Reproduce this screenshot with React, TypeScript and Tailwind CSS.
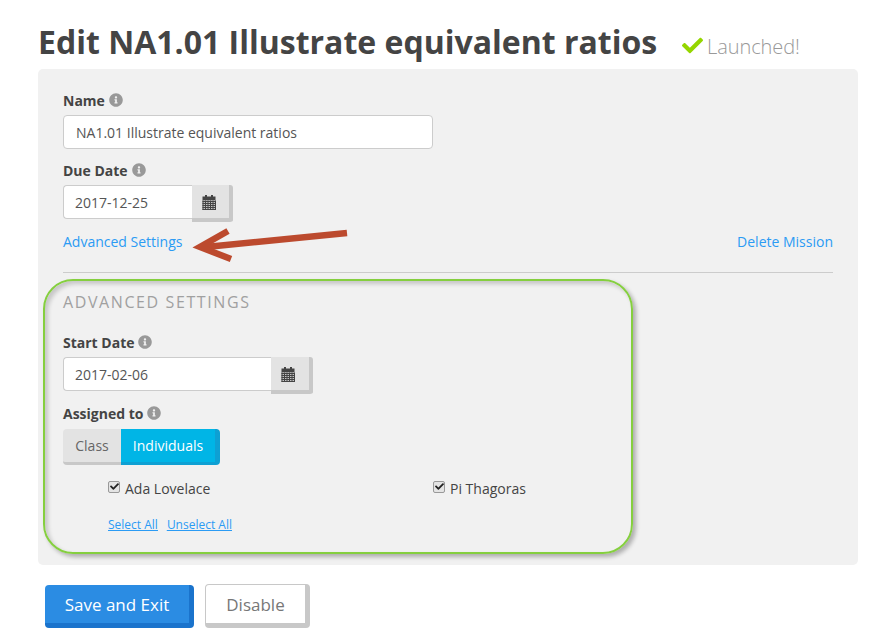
import React from "react";
import { FaCheck, FaInfoCircle } from "react-icons/fa";

const Label = ({ children, mt }: { children: React.ReactNode; mt: string }) => (
  <div className={`flex items-center gap-[4px] h-[20px] text-[14px] font-bold text-[#444] ${mt}`}>
    <span>{children}</span>
    <FaInfoCircle className="text-[#999] w-[14px] h-[14px] -mt-[1px]" />
  </div>
);

const CalendarIcon = () => (
  <svg width="14" height="15" viewBox="0 0 14 15" fill="none">
    <rect x="0.5" y="1.5" width="13" height="4" fill="#444" />
    <rect x="3" y="0" width="2" height="3" fill="#444" />
    <rect x="9" y="0" width="2" height="3" fill="#444" />
    <rect x="0.5" y="5.5" width="13" height="9" fill="#c4c4c4" />
    <path d="M0.5 6.5H13.5M0.5 8.5H13.5M0.5 10.5H13.5M0.5 12.5H13.5M0.5 14.5H13.5M1 5.5V15M3.5 5.5V15M6 5.5V15M8.5 5.5V15M11 5.5V15M13.5 5.5V15" stroke="#444" strokeWidth="1" />
  </svg>
);

const DateInput = ({ value, inputW, addonW }: { value: string; inputW: string; addonW: string }) => (
  <div className="flex items-start mt-[5px]">
    <div className={`${inputW} h-[34px] bg-white border border-[#ccc] rounded-l-[4px] border-r-0 pl-[11px] flex items-center text-[14px] text-[#555]`}>{value}</div>
    <div className={`${addonW} h-[37px] bg-[#e3e3e3] border-r-[4px] border-b-[4px] border-[#c8c8c8] rounded-r-[3px] flex items-center justify-center pr-[4px] pt-[1px]`}>
      <CalendarIcon />
    </div>
  </div>
);

const Check = ({ label, cls }: { label: string; cls: string }) => (
  <label className={`flex items-center text-[14px] text-[#444] h-[20px] ${cls}`}>
    <span className="relative w-[12px] h-[12px] -mt-[3px] mr-[5px] rounded-[2px] border border-[#999] bg-[#e4e4e4] flex items-center justify-center">
      <FaCheck className="w-[9px] h-[9px] text-[#222]" />
    </span>
    {label}
  </label>
);

export default function App() {
  return (
    <div className="relative w-[883px] h-[639px] overflow-hidden bg-white font-['Open_Sans',sans-serif]">
      <div className="h-[69px] pl-[38px] pt-[20px] flex items-start">
        <h1 className="text-[32px] leading-[44px] font-bold text-[#444] whitespace-nowrap">Edit NA1.01 Illustrate equivalent ratios</h1>
        <div className="flex items-center ml-[25px] mt-[8px] h-[36px]">
          <FaCheck className="w-[21px] h-[21px] text-[#95d600] mr-[4px] -mt-[1px]" />
          <span className="text-[20px] font-light text-[#999] tracking-[-0.1px] mt-[2px]">Launched!</span>
        </div>
      </div>

      <div className="relative mx-[38px] w-[820px] h-[496px] bg-[#f1f1f1] rounded-[5px] px-[25px] pt-[21px]">
        <Label mt="">Name</Label>
        <div className="mt-[5px] w-[370px] h-[34px] bg-white border border-[#ccc] rounded-[4px] pl-[12px] flex items-center text-[14px] text-[#555]">NA1.01 Illustrate equivalent ratios</div>
        <Label mt="mt-[11px]">Due Date</Label>
        <DateInput value="2017-12-25" inputW="w-[129px]" addonW="w-[41px]" />
        <div className="flex justify-between items-center h-[20px] mt-[9px] text-[14px] text-[#2b9bf4]">
          <a>Advanced Settings</a>
          <a>Delete Mission</a>
        </div>
        <div className="mt-[21px] h-px bg-[#ccc]" />
        <h2 className="mt-[18px] text-[16px] leading-[22px] tracking-[1.6px] uppercase text-[#a0a0a0] font-normal">Advanced Settings</h2>
        <Label mt="mt-[19px]">Start Date</Label>
        <DateInput value="2017-02-06" inputW="w-[208px]" addonW="w-[42px]" />
        <Label mt="mt-[9px]">Assigned to</Label>
        <div className="flex mt-[6px] h-[36px] text-[14px]">
          <div className="w-[58px] bg-[#e3e3e3] border-b-[3px] border-[#c8c8c8] rounded-l-[4px] flex items-center justify-center text-[#666]">Class</div>
          <div className="w-[99px] bg-[#00b5e6] border-b-[3px] border-r-[5px] border-[#0ea0d3] rounded-r-[4px] flex items-center justify-center text-white">Individuals</div>
        </div>
        <div className="flex mt-[13px]">
          <Check label="Ada Lovelace" cls="ml-[45px] w-[325px]" />
          <Check label="Pi Thagoras" cls="" />
        </div>
        <div className="flex gap-[9px] ml-[45px] mt-[18px] text-[12px] leading-[18px] text-[#2b9bf4] underline">
          <a>Select All</a>
          <a>Unselect All</a>
        </div>
        <div className="absolute left-[5px] top-[210px] w-[590px] h-[275px] border-[2px] border-[#85cf3f] rounded-[30px] shadow-[3px_3px_4px_rgba(0,0,0,0.28),inset_3px_3px_4px_rgba(0,0,0,0.18)] pointer-events-none" />
      </div>

      <div className="flex items-start pl-[45px] mt-[20px]">
        <div className="w-[149px] h-[43px] bg-[#2b8ce3] border-r-[5px] border-b-[5px] border-[#1a73cc] rounded-[4px] flex items-center justify-center text-[17px] text-white pt-[2px]">Save and Exit</div>
        <div className="ml-[11px] -mt-px w-[105px] h-[44px] bg-white border-t-[1px] border-l-[1px] border-r-[5px] border-b-[5px] border-[#c8c8c8] rounded-[4px] flex items-center justify-center text-[17px] text-[#777] pt-[2px]">Disable</div>
      </div>

      <svg className="absolute left-[190px] top-[225px]" width="160" height="40" viewBox="190 225 160 40">
        <path d="M347 233 L206 247" stroke="#bc4a2e" strokeWidth="6.5" fill="none" />
        <path d="M228 231 L200 247 L231 259" stroke="#bc4a2e" strokeWidth="6.5" fill="none" />
      </svg>
    </div>
  );
}
